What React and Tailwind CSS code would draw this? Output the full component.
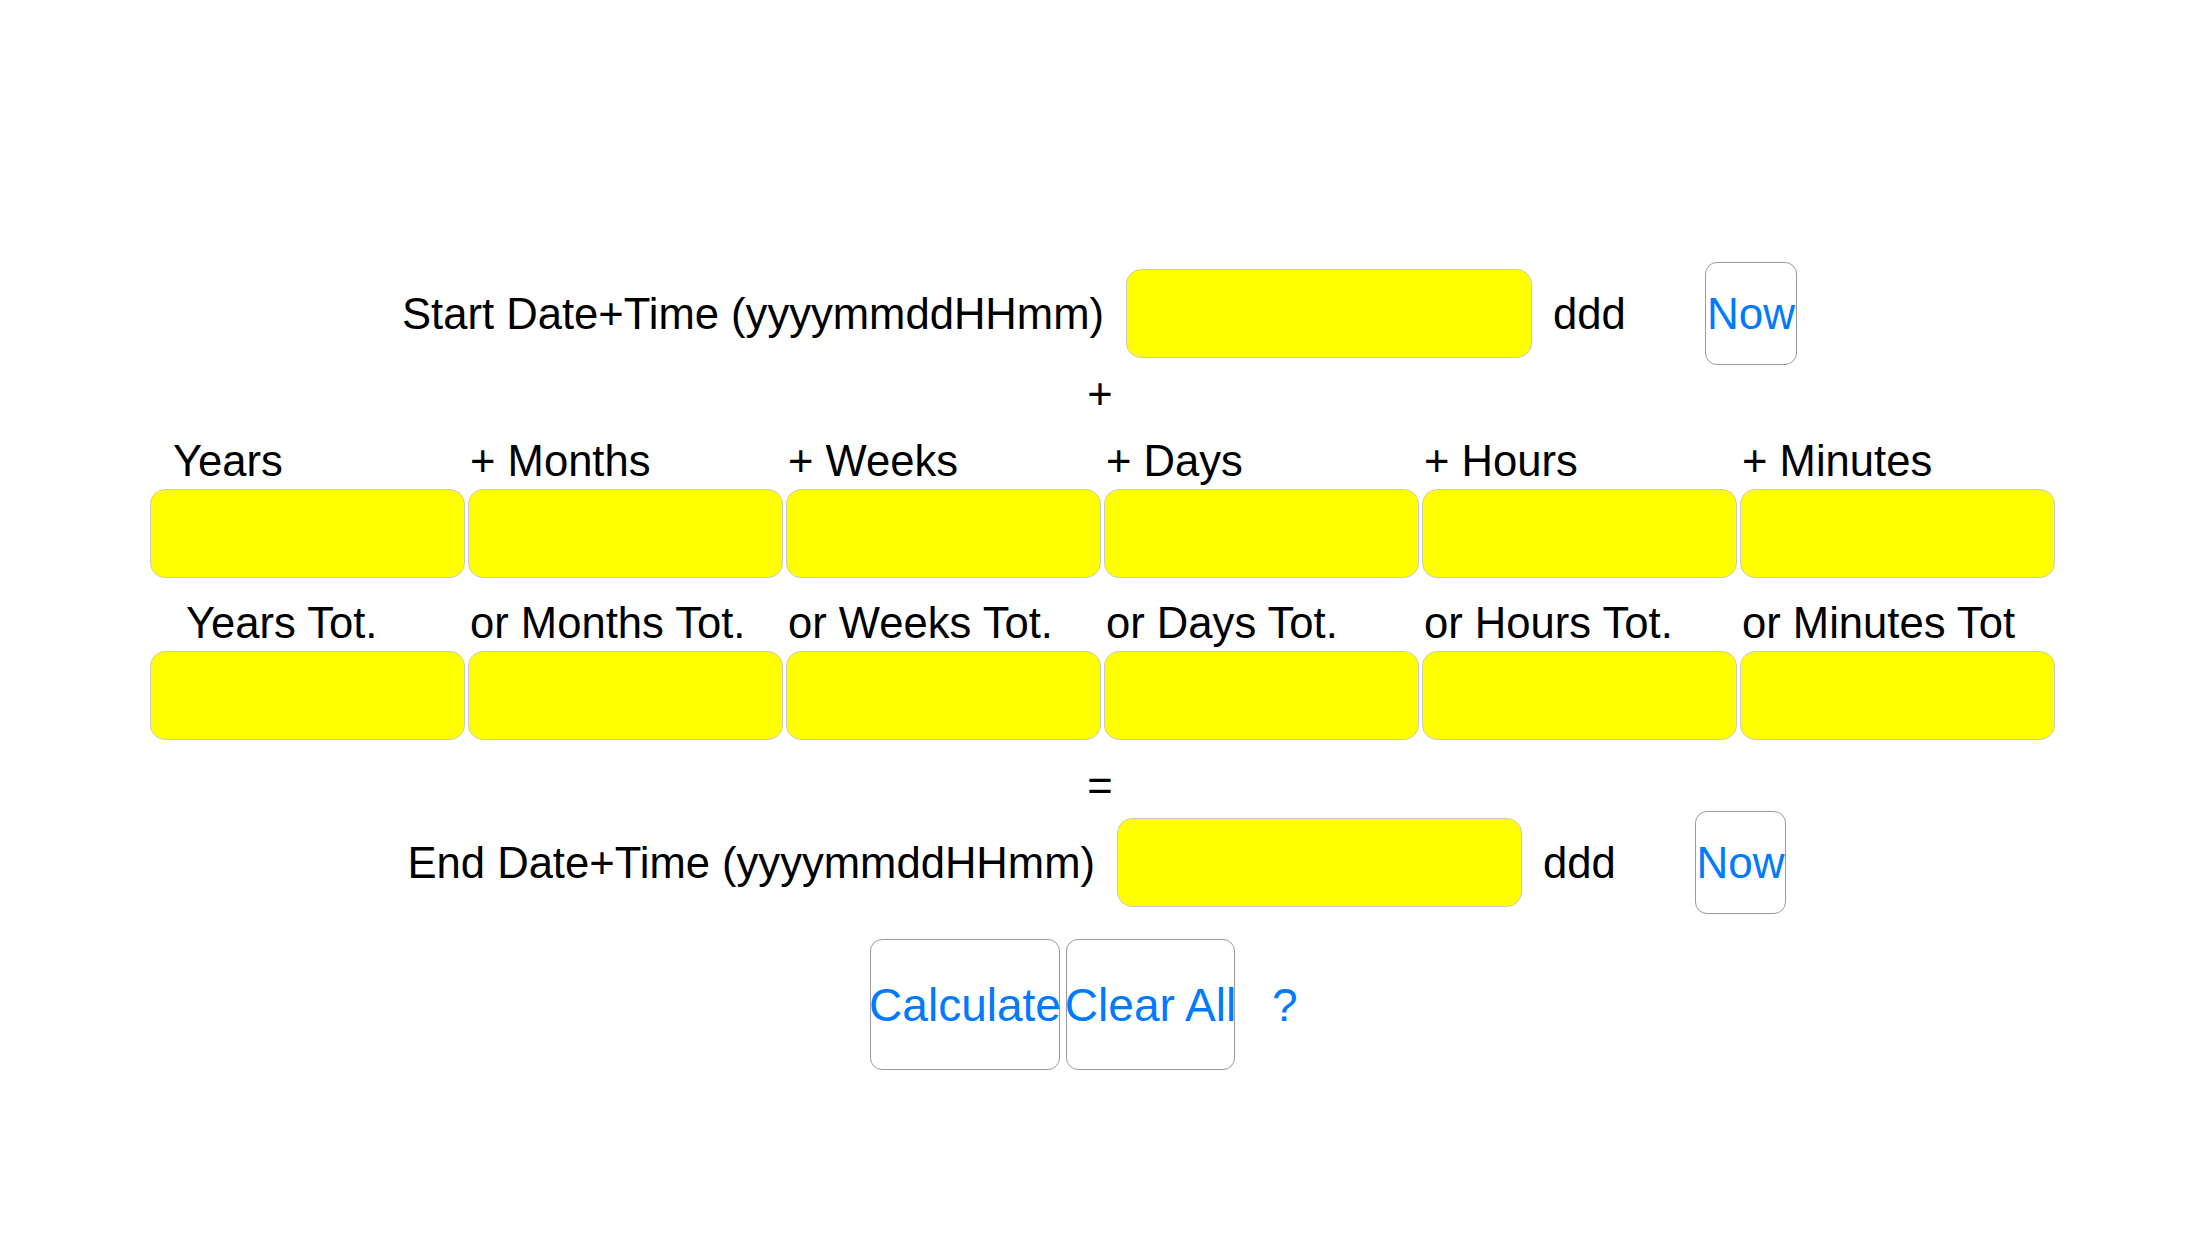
const durationLabels = ['Years', '+ Months', '+ Weeks', '+ Days', '+ Hours', '+ Minutes'];
const totalLabels = ['Years Tot.', 'or Months Tot.', 'or Weeks Tot.', 'or Days Tot.', 'or Hours Tot.', 'or Minutes Tot'];

function YellowBox({ className = '' }) {
  return <div className={`h-[89px] bg-[#ffff00] border border-[#c9c9c9] rounded-[15px] ${className}`} />;
}

function NowButton({ width }) {
  return (
    <button className={`${width} h-[103px] shrink-0 border border-[#9a9a9a] rounded-[12px] text-[44px] leading-none text-[#007aff] flex items-center justify-center`}>
      Now
    </button>
  );
}

function DateRow({ label, labelWidth, boxWidth, nowWidth }) {
  return (
    <div className="flex items-center h-[103px]">
      <div className={`${labelWidth} shrink-0 text-right whitespace-nowrap`}>{label}</div>
      <YellowBox className={`ml-[22px] ${boxWidth} shrink-0`} />
      <div className="ml-[21px] w-[152px] shrink-0">ddd</div>
      <NowButton width={nowWidth} />
    </div>
  );
}

function FieldRow({ labels, first }) {
  return (
    <div className="ml-[150px]">
      <div className="grid grid-cols-[repeat(6,315px)] gap-x-[3px] h-[50px]">
        {labels.map((l, i) => (
          <div key={l} className={`whitespace-nowrap ${i === 0 ? first : 'pl-[2px]'}`}>{l}</div>
        ))}
      </div>
      <div className="grid grid-cols-[repeat(6,315px)] gap-x-[3px] mt-[3px]">
        {labels.map((l) => (
          <YellowBox key={l} />
        ))}
      </div>
    </div>
  );
}

export default function App() {
  return (
    <div className="w-full h-[1242px] bg-white text-black font-['Liberation_Sans',Arial,sans-serif] text-[43.6px] leading-[50px] overflow-hidden">
      <div className="pt-[262px]">
        <DateRow label="Start Date+Time (yyyymmddHHmm)" labelWidth="w-[1104px]" boxWidth="w-[406px]" nowWidth="w-[92px]" />

        <div className="mt-[4px] w-[2200px] text-center">+</div>

        <div className="mt-[17px]">
          <FieldRow labels={durationLabels} first="pl-[23px]" />
        </div>

        <div className="mt-[20px]">
          <FieldRow labels={totalLabels} first="pl-[36px]" />
        </div>

        <div className="mt-[21px] w-[2200px] text-center">=</div>

        <DateRow label="End Date+Time (yyyymmddHHmm)" labelWidth="w-[1095px]" boxWidth="w-[405px]" nowWidth="w-[91px]" />

        <div className="mt-[25px] ml-[870px] flex items-center">
          <button className="w-[190px] h-[131px] border border-[#9a9a9a] rounded-[12px] text-[46px] leading-none text-[#007aff] whitespace-nowrap flex items-center justify-center">
            Calculate
          </button>
          <button className="ml-[6px] w-[169px] h-[131px] border border-[#9a9a9a] rounded-[12px] text-[46px] leading-none text-[#007aff] whitespace-nowrap flex items-center justify-center">
            Clear All
          </button>
          <span className="ml-[37px] text-[46px] text-[#007aff]">?</span>
        </div>
      </div>
    </div>
  );
}
